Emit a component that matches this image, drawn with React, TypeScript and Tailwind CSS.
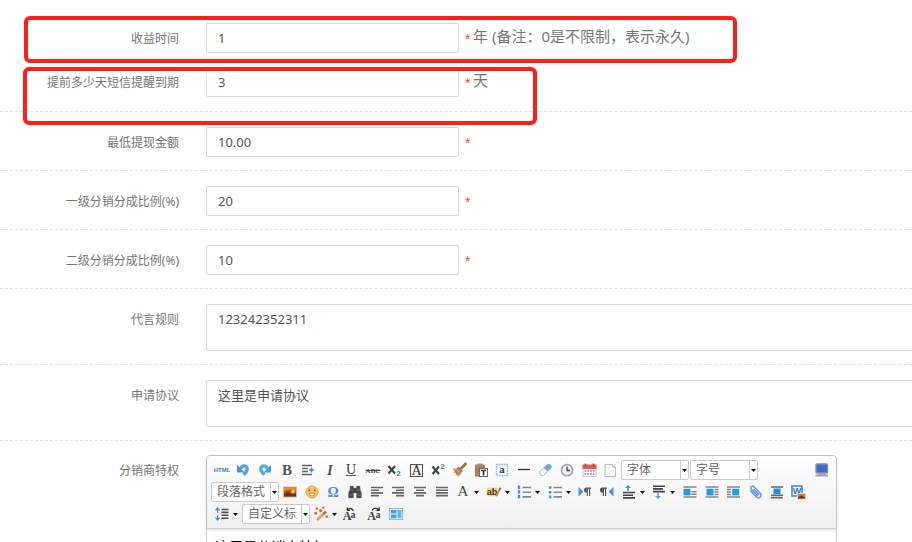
import type { ReactNode } from 'react';

const serif = 'Liberation Serif, serif';
const sans = 'Liberation Sans, sans-serif';

function Svg({ children }: { children: ReactNode }) {
  return (
    <svg viewBox="0 0 20 20" className="block h-5 w-5 shrink-0" aria-hidden="true">
      {children}
    </svg>
  );
}

type GlyphProps = {
  x?: number;
  y?: number;
  size: number;
  fill?: string;
  family?: string;
  weight?: number;
  italic?: boolean;
  children: string;
};

function Glyph({ x = 10, y = 15, size, fill = '#444', family = serif, weight = 400, italic, children }: GlyphProps) {
  return (
    <text
      x={x}
      y={y}
      fontSize={size}
      fill={fill}
      fontFamily={family}
      fontWeight={weight}
      fontStyle={italic ? 'italic' : 'normal'}
      textAnchor="middle"
    >
      {children}
    </text>
  );
}

const lines = (d: string, color = '#666') => <path d={d} stroke={color} strokeWidth="1.6" fill="none" />;

const icons: Record<string, ReactNode> = {
  html: <Glyph size={6} y={12} fill="#3c7aa8" family={sans} weight={700}>HTML</Glyph>,
  undo: (
    <>
      <path d="M7.5 9C8.5 5 14.4 5 14.2 9.2C14.1 11.6 12.6 13 10.5 14.8" stroke="#5aa2dc" strokeWidth="3.4" fill="none" />
      <path d="M4 4.8V12.4H11.6Z" fill="#4b93d3" />
    </>
  ),
  redo: (
    <>
      <path d="M12.5 9C11.5 5 5.6 5 5.8 9.2C5.9 11.6 7.4 13 9.5 14.8" stroke="#5ab0e2" strokeWidth="3.4" fill="none" />
      <path d="M16 4.8V12.4H8.4Z" fill="#4ba0dc" />
    </>
  ),
  bold: <Glyph size={15} weight={700} fill="#555">B</Glyph>,
  indent: (
    <>
      {lines('M4 5.5H14M4 8.5H10M4 11.5H10M4 14.5H14')}
      <path d="M11 10H16M13.5 7.5V12.5" stroke="#4a7fea" strokeWidth="1.6" />
    </>
  ),
  italic: <Glyph size={15} weight={700} italic fill="#555">I</Glyph>,
  underline: (
    <>
      <Glyph size={14} y={14} fill="#333">U</Glyph>
      <path d="M5 15.5H15" stroke="#555" />
    </>
  ),
  strike: (
    <>
      <Glyph size={7} y={13} weight={700}>ABC</Glyph>
      <path d="M2.5 10.5H17.5" stroke="#444" />
    </>
  ),
  sub: (
    <>
      <path d="M4.5 6L11 13.5M11 6L4.5 13.5" stroke="#444" strokeWidth="2.2" />
      <Glyph x={14.5} y={16} size={8} fill="#3b7cf0" family={sans} weight={700}>2</Glyph>
    </>
  ),
  border: (
    <>
      <rect x="4.5" y="4.5" width="12" height="12" fill="#f4f4f4" stroke="#555" />
      <Glyph x={10.5} y={15} size={14} fill="#333">A</Glyph>
    </>
  ),
  sup: (
    <>
      <path d="M4.5 6.5L11 14M11 6.5L4.5 14" stroke="#444" strokeWidth="2.2" />
      <Glyph x={14.5} y={9} size={8} fill="#3b7cf0" family={sans} weight={700}>2</Glyph>
    </>
  ),
  brush: (
    <>
      <path d="M16.5 4L12 8.5" stroke="#a86c34" strokeWidth="2.8" strokeLinecap="round" />
      <path d="M9.5 6.5L14 11L11.5 13.5L7 9Z" fill="#7e8794" />
      <path d="M3 8.5L7.5 8.5L12.5 13.5L9.5 16.5L6.5 14.5L7 13L4.5 12.5L5.5 10.8Z" fill="#dca05a" />
      <path d="M7 10L10 14.5M5.5 9.5L8 14" stroke="#a96522" strokeWidth="0.8" />
    </>
  ),
  paste: (
    <>
      <rect x="4" y="4.5" width="10" height="12" rx="1" fill="#b87d4c" />
      <rect x="6.5" y="3.5" width="5" height="3" fill="#8b8f96" />
      <rect x="8.5" y="8.5" width="8" height="8" fill="#fff" stroke="#667" />
      <path d="M10 10.5H15M12.5 10.5V15.5" stroke="#333" strokeWidth="1.6" />
    </>
  ),
  select: (
    <>
      <rect x="4.5" y="4.5" width="11" height="11" fill="#f2f8fe" stroke="#8bbdf0" strokeWidth="1.4" strokeDasharray="1.6 0.8" />
      <Glyph y={13} size={11} weight={700}>a</Glyph>
    </>
  ),
  rule: <path d="M4 9.5H16" stroke="#333" strokeWidth="1.3" />,
  eraser: (
    <>
      <path d="M4 12L12.5 4.5Q14 3.5 15.5 5L16.3 6Q17 7 16 8L8.5 15.5H6Z" fill="#eef4fa" stroke="#9fb4ca" strokeWidth="0.8" />
      <path d="M8.6 8L12.5 4.5Q14 3.5 15.5 5L16.3 6Q17 7 16 8L12.5 11.5Z" fill="#6ea8df" />
    </>
  ),
  clock: (
    <>
      <circle cx="10" cy="10.2" r="5.6" fill="#e9ebed" stroke="#9ea2a7" strokeWidth="1.5" />
      <path d="M10 6.5V10.5H13" stroke="#444" strokeWidth="1.3" fill="none" />
    </>
  ),
  calendar: (
    <>
      <rect x="4" y="5" width="13" height="11.5" fill="#f3f5f8" stroke="#b9bec6" strokeWidth="0.8" />
      <rect x="3.6" y="4.6" width="13.8" height="4.4" fill="#e85850" />
      <path d="M6.5 3.5V6.5M14.5 3.5V6.5" stroke="#a33a34" strokeWidth="1.4" />
      <path d="M5.5 11H15.5M5.5 14H15.5" stroke="#8b95a3" strokeWidth="1.4" strokeDasharray="1.8 1" />
    </>
  ),
  page: (
    <>
      <path d="M5 4.5H12.5L15.5 7.5V16.5H5Z" fill="#f6f8fa" stroke="#b4bac2" />
      <path d="M12.5 4.5V7.5H15.5" fill="#d7dce2" stroke="#b4bac2" strokeWidth="0.8" />
    </>
  ),
  screen: (
    <>
      <rect x="5" y="4" width="11.5" height="9" rx="1" fill="#4068cf" stroke="#8390ab" strokeWidth="1.4" />
      <path d="M7.5 13.6H14V14.6H17V16.5H4.5V14.6H7.5Z" fill="#98a2b6" />
    </>
  ),
  picture: (
    <>
      <rect x="3.5" y="5" width="13" height="10" fill="#b5531a" stroke="#e6bd9a" />
      <path d="M4 9Q10 6.5 16 9V5.6H4Z" fill="#ea8a36" />
      <path d="M4 14.5V12L8 10L12 12.5L16 11.5V14.5Z" fill="#6a3216" />
      <circle cx="13" cy="9.5" r="1.8" fill="#fbd45a" />
    </>
  ),
  smiley: (
    <>
      <circle cx="10" cy="10" r="6" fill="#fbc75a" stroke="#e6a444" />
      <path d="M7.2 7.3V9.3M12.8 7.3V9.3" stroke="#7a4a12" strokeWidth="1.4" />
      <path d="M6.8 11.3H13.2Q12.6 14 10 14T6.8 11.3Z" fill="#fff" stroke="#a8641c" strokeWidth="0.7" />
    </>
  ),
  omega: <Glyph size={14} weight={700} fill="#4a8cf4">Ω</Glyph>,
  search: (
    <>
      <path
        d="M5 4H8.5V6H11.5V4H15V7L16.5 11V16H11.5V11H8.5V16H3.5V11L5 7Z"
        fill="#444"
        stroke="#888"
        strokeWidth="0.5"
      />
      <path d="M5 8H8M12 8H15M4.5 13H7.5M12.5 13H15.5" stroke="#888" strokeWidth="0.8" />
    </>
  ),
  left: lines('M4 5.5H16M4 8.2H12M4 10.9H16M4 13.6H12'),
  right: lines('M4 5.5H16M8 8.2H16M4 10.9H16M8 13.6H16'),
  center: lines('M4 5.5H16M6 8.2H14M4 10.9H16M6 13.6H14'),
  justify: lines('M4 5.5H16M4 8.2H16M4 10.9H16M4 13.6H16'),
  color: <Glyph size={15} y={14}>A</Glyph>,
  marker: (
    <>
      <rect x="3" y="5.5" width="11" height="9" rx="2" fill="#fccb7c" />
      <Glyph x={8} y={13} size={9} family={sans} weight={700} fill="#333">ab</Glyph>
      <path d="M16 7L12 14" stroke="#b08a5c" strokeWidth="1.8" />
      <path d="M16.6 5.8L15.6 7.6" stroke="#e0503c" strokeWidth="2" />
    </>
  ),
  ol: (
    <>
      {lines('M8.5 5.5H17M8.5 10.2H17M8.5 14.9H17', '#888')}
      <path d="M5 3.5V16.5" stroke="#4a86e8" strokeWidth="2.4" strokeDasharray="3.4 1.3" />
    </>
  ),
  ul: (
    <>
      {lines('M8.5 5.5H17M8.5 10.2H17M8.5 14.9H17', '#888')}
      <path d="M3.8 4.2H6.4V6.8H3.8ZM3.8 8.9H6.4V11.5H3.8ZM3.8 13.6H6.4V16.2H3.8Z" fill="#4a8cf4" />
    </>
  ),
  ltr: (
    <>
      <path d="M3.5 5L8.5 9.8L3.5 14.6Z" fill="#4a90f0" />
      <path d="M16 5.5H11.5A2.6 2.6 0 0 0 11.5 10.7H11.8V14H13V7H14V14H15.2V7H16Z" fill="#666" />
    </>
  ),
  rtl: (
    <>
      <path d="M16.5 5L11.5 9.8L16.5 14.6Z" fill="#4a90f0" />
      <path d="M9.8 5.5H5.5A2.6 2.6 0 0 0 5.5 10.7H5.8V14H7V7H8V14H9.2V7H9.8Z" fill="#555" />
    </>
  ),
  rowTop: (
    <>
      {lines('M4 10.5H16M4 13.2H14M4 15.9H16', '#444')}
      <path d="M9 3L12 6H9.8V9H8.2V6H6Z" fill="#5a86d8" />
    </>
  ),
  rowBottom: (
    <>
      {lines('M4 4.2H16M4 6.9H14M4 9.6H16', '#444')}
      <path d="M9 17L12 14H9.8V11H8.2V14H6Z" fill="#6f97d8" />
    </>
  ),
  imgLeft: (
    <>
      {lines('M3.5 5H16.5M11.5 9.8H16.5M11.5 12.2H16.5M3.5 15H16.5', '#888')}
      <rect x="3.5" y="6.8" width="7" height="6.6" fill="#1e9fe0" />
    </>
  ),
  imgNone: (
    <>
      {lines('M3.5 5H16.5M12.5 7.5H16.5M12.5 10H16.5M12.5 12.5H16.5M3.5 15H16.5', '#888')}
      <rect x="4.5" y="6.8" width="7" height="6.6" fill="#1e9fe0" />
    </>
  ),
  imgRight: (
    <>
      {lines('M4 5H17M4 7.5H8M4 10H8M4 12.5H8M4 15H17', '#888')}
      <rect x="9.2" y="6.8" width="7" height="6.6" fill="#1e9fe0" />
    </>
  ),
  attach: (
    <path
      d="M12.5 13.5L6.5 7.5Q5 5.5 6.5 4.5T9.5 5.2L15 11Q17 13.5 15 15.2T11 14.5L5.5 9M9 7.5L13.5 12.2"
      stroke="#6c93ea"
      strokeWidth="1.5"
      fill="none"
      strokeLinecap="round"
    />
  ),
  imgCenter: (
    <>
      {lines('M4 5H16M4 13.2H16M4 15.6H16', '#666')}
      <rect x="6.5" y="6.5" width="7" height="5.5" fill="#1e93d4" />
    </>
  ),
  word: (
    <>
      <rect x="4" y="4" width="10" height="10" fill="#fff" stroke="#3f8ee0" strokeWidth="1.6" />
      <Glyph x={9} y={12} size={9} family={sans} weight={700} fill="#2f6fc0">W</Glyph>
      <rect x="9.5" y="11.5" width="8" height="5.5" fill="#e07a2a" stroke="#d7d2cc" />
      <path d="M10 16.5V15L13 13.5L17 15.5V16.5Z" fill="#7c3110" />
    </>
  ),
  lineHeight: (
    <>
      {lines('M9.5 5.5H16.5M9.5 8.4H16.5M9.5 11.3H16.5M9.5 14.2H16.5', '#555')}
      <path d="M5.5 3L8 6.2H6.2V8.7H4.8V6.2H3ZM5.5 17L8 13.8H6.2V11.3H4.8V13.8H3Z" fill="#4f7fe0" />
    </>
  ),
  wand: (
    <>
      <path d="M6 16L13.5 9" stroke="#e0a25c" strokeWidth="2.8" />
      <path d="M12.5 10L15 7.6" stroke="#b56a34" strokeWidth="2.6" />
      <g fill="#f2653c">
        <circle cx="4.6" cy="9.2" r="1.5" />
        <circle cx="5.8" cy="4.6" r="1.3" />
        <circle cx="9.6" cy="6.6" r="1.6" />
        <circle cx="12.2" cy="3.8" r="1.2" />
        <circle cx="15.8" cy="12.6" r="1.4" />
      </g>
    </>
  ),
  upper: (
    <>
      <Glyph x={5} y={16} size={12} weight={700} fill="#444">A</Glyph>
      <Glyph x={11} y={14} size={10} weight={700} fill="#444">a</Glyph>
      <path d="M11.5 7Q9 2.5 5.5 6M5.3 3.5V6.3H8" stroke="#333" strokeWidth="1.3" fill="none" />
    </>
  ),
  lower: (
    <>
      <Glyph x={7.5} y={16} size={12} weight={700} fill="#444">A</Glyph>
      <Glyph x={14} y={14} size={10} weight={700} fill="#444">a</Glyph>
      <path d="M8 6.5Q11 2 15 6M15.2 3.3V6.3H12.3" stroke="#333" strokeWidth="1.3" fill="none" />
    </>
  ),
  template: (
    <>
      <rect x="3.5" y="4.5" width="13" height="11" fill="#e4f2fb" stroke="#8dbde0" />
      <rect x="5" y="6" width="5.5" height="3.5" fill="#4ea3dc" />
      <rect x="5" y="10.5" width="5.5" height="3.8" fill="#4ea3dc" />
      <rect x="11.5" y="6" width="3.8" height="8.3" fill="#63b1e3" />
    </>
  ),
};

const rowOne = [
  'html', 'undo', 'redo', 'bold', 'indent', 'italic', 'underline', 'strike', 'sub', 'border',
  'sup', 'brush', 'paste', 'select', 'rule', 'eraser', 'clock', 'calendar', 'page',
];

const rowTwo = [
  'picture', 'smiley', 'omega', 'search', 'left', 'right', 'center', 'justify', 'color', 'marker',
  'ol', 'ul', 'ltr', 'rtl', 'rowTop', 'rowBottom', 'imgLeft', 'imgNone', 'imgRight', 'attach', 'imgCenter', 'word',
];

const withMenu = ['color', 'marker', 'ol', 'ul', 'rowTop', 'rowBottom', 'lineHeight', 'wand'];

function Arrow() {
  return (
    <svg viewBox="0 0 5 3" className="h-[3px] w-[5px] shrink-0" aria-hidden="true">
      <path d="M0 0H5L2.5 3Z" fill="#111" />
    </svg>
  );
}

function Tool({ name }: { name: string }) {
  const menu = withMenu.includes(name);
  return (
    <button
      type="button"
      aria-label={name}
      className={
        menu ? 'flex w-[31px] min-w-0 items-center gap-px pl-px' : 'flex w-[22px] min-w-0 items-center justify-center'
      }
    >
      <Svg>{icons[name]}</Svg>
      {menu && <Arrow />}
    </button>
  );
}

function Combo({ label }: { label: string }) {
  return (
    <div className="flex h-5 w-[68px] shrink-0 rounded-xs border border-[#ccc] bg-white">
      <select
        aria-label={label}
        className="w-[58px] appearance-none overflow-hidden pr-1 pl-[5px] text-xs leading-[18px] text-[#666] outline-none"
      >
        <option>{label}</option>
      </select>
      <span className="flex flex-1 items-center justify-center border-l border-[#ccc]">
        <Arrow />
      </span>
    </div>
  );
}

function Row({ id, label, children, last }: { id: string; label: string; children: ReactNode; last?: boolean }) {
  return (
    <div
      className={
        last ? 'flex gap-[27px] pt-3.5' : 'flex gap-[27px] border-b border-dashed border-[#e2e2e2] pt-[15px] pb-[13px]'
      }
    >
      <Label id={id}>{label}</Label>
      {children}
    </div>
  );
}

function Label({ id, children }: { id: string; children: string }) {
  return (
    <label htmlFor={id} className="h-[30px] w-[179px] shrink-0 text-right text-xs leading-8 text-[#777]">
      {children}
    </label>
  );
}

function Field({ id, value, unit }: { id: string; value: string; unit?: string }) {
  return (
    <div className="flex h-[30px] items-center">
      <input
        id={id}
        type="text"
        defaultValue={value}
        className="h-full w-[253px] rounded-xs border border-[#d9d9d9] bg-white px-[11px] text-[13px] text-[#555] outline-none"
      />
      <span className="ml-1.5 w-2 pt-0.5 font-['Liberation_Sans'] text-sm leading-5 text-[#f4511e]">*</span>
      {unit && <span className="pb-1 text-[15px] leading-5 text-[#777]">{unit}</span>}
    </div>
  );
}

function Area({ id, value }: { id: string; value: string }) {
  return (
    <textarea
      id={id}
      defaultValue={value}
      className="block h-[47px] w-[900px] shrink-0 resize-none overflow-hidden rounded-xs border border-[#d9d9d9] bg-white px-[11px] py-1 text-[13px] leading-5 text-[#555] outline-none"
    />
  );
}

function Editor() {
  return (
    <div className="w-[631px] shrink-0 rounded-t-sm border border-[#ccc] bg-white">
      <div className="flex flex-col gap-0.5 rounded-t-sm border-b border-[#ccc] bg-linear-to-b from-white to-[#efefef] p-1 shadow-[0_1px_4px_rgba(0,0,0,0.15)]">
        <div className="flex h-5">
          <div className="flex w-[410px]">
            {rowOne.map((name) => (
              <Tool key={name} name={name} />
            ))}
          </div>
          <div className="flex gap-px">
            <Combo label="字体" />
            <Combo label="字号" />
          </div>
          <div className="ml-auto flex">
            <Tool name="screen" />
          </div>
        </div>
        <div className="flex h-5">
          <Combo label="段落格式" />
          <div className="flex w-[530px]">
            {rowTwo.map((name) => (
              <Tool key={name} name={name} />
            ))}
          </div>
        </div>
        <div className="flex h-5">
          <Tool name="lineHeight" />
          <Combo label="自定义标题" />
          <Tool name="wand" />
          <Tool name="upper" />
          <Tool name="lower" />
          <Tool name="template" />
        </div>
      </div>
      <div
        id="privilege"
        role="textbox"
        aria-label="分销商特权"
        contentEditable
        suppressContentEditableWarning
        className="min-h-[200px] px-2 pt-2 text-sm leading-5 text-black outline-none"
      >
        这里是分销商特权
      </div>
    </div>
  );
}

export default function App() {
  return (
    <div className="relative h-screen overflow-hidden bg-white font-['Noto_Sans','Noto_Sans_CJK_SC',sans-serif]">
      <form>
        <div className="flex flex-col gap-3.5 border-b border-dashed border-[#e2e2e2] pt-[23px] pb-3.5">
          <div className="flex gap-[27px]">
            <Label id="years">收益时间</Label>
            <Field id="years" value="1" unit="年 (备注：0是不限制，表示永久)" />
          </div>
          <div className="flex gap-[27px]">
            <Label id="remind">提前多少天短信提醒到期</Label>
            <Field id="remind" value="3" unit="天" />
          </div>
        </div>
        <Row id="minimum" label="最低提现金额">
          <Field id="minimum" value="10.00" />
        </Row>
        <Row id="level1" label="一级分销分成比例(%)">
          <Field id="level1" value="20" />
        </Row>
        <Row id="level2" label="二级分销分成比例(%)">
          <Field id="level2" value="10" />
        </Row>
        <Row id="rules" label="代言规则">
          <Area id="rules" value="123242352311" />
        </Row>
        <Row id="agreement" label="申请协议">
          <Area id="agreement" value="这里是申请协议" />
        </Row>
        <Row id="privilege" label="分销商特权" last>
          <Editor />
        </Row>
      </form>

      {/* highlight frames over the two new settings */}
      <div className="pointer-events-none absolute top-4 left-6 h-[47px] w-[713px] rounded-md border-4 border-[#ff2015]" />
      <div className="pointer-events-none absolute top-[67px] left-[23px] h-[58px] w-[514px] rounded-md border-4 border-[#ff2015]" />
    </div>
  );
}
